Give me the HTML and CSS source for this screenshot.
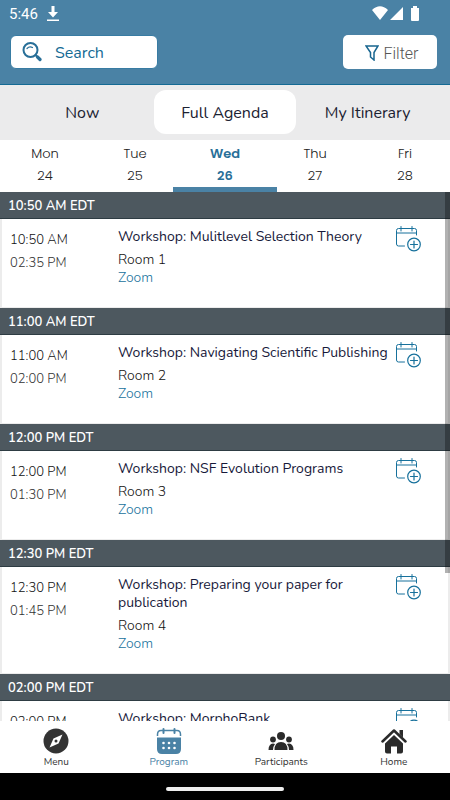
FILE: index.html
```html
<!DOCTYPE html>
<html lang="en">
<head>
<meta charset="utf-8">
<meta name="viewport" content="width=device-width, initial-scale=1">
<title>Program</title>
<link rel="stylesheet" href="styles.css">
</head>
<body>
<svg class="defs" aria-hidden="true">
  <symbol id="add-calendar" viewBox="0 0 26 26">
    <g fill="none" stroke="currentColor" stroke-linecap="round">
      <path d="M9.500 20H3.500Q1.500 20 1.500 18V4.500Q1.500 2.500 3.500 2.500H19.500Q21.500 2.500 21.500 4.500V9M1.500 7H21.500M6 .5V5M17 .5V5"/>
      <circle cx="19" cy="18.500" r="6.300" stroke-width="1.200"/>
      <path d="M15.500 18.500H22.500M19 15V22" stroke-width="1.200"/>
    </g>
  </symbol>
</svg>
<header class="top">
  <div class="status">
    <span>5:46</span>
    <svg class="download" viewBox="0 0 12 16" fill="currentColor"><path d="M4.500 0h3v6H11l-5 5.500L1 6h3.500zM0 13.500h12V15H0z"/></svg>
    <svg class="signals" viewBox="0 0 48 16" fill="currentColor"><path d="M0 4Q8-3.500 16 4L8 14zM18 14 31 1V14zM39 2h2V0h4v2h2v12q0 1-1 1h-6q-1 0-1-1V2z"/></svg>
  </div>
  <div class="tools">
    <label class="search">
      <svg viewBox="0 0 20 20" fill="none" stroke="currentColor" stroke-linecap="round"><circle cx="8.500" cy="8" r="7" stroke-width="2"/><path d="M5 6.500Q7.500 3.800 10.500 5.500" stroke-width="1.200"/><path d="m13.500 13 1.500 1.500" stroke-width="2"/><path d="m15.500 15 2.500 2.500" stroke-width="3.200"/></svg>
      <input type="text" placeholder="Search" aria-label="Search">
    </label>
    <button class="filter" type="button">
      <svg viewBox="0 0 14 16" fill="none" stroke="currentColor" stroke-width="1.500"><path d="M1 1H13L9 7.500V15L5.500 12V7.500Z"/></svg>
      Filter
    </button>
  </div>
</header>
<nav class="tabs">
  <button type="button">Now</button>
  <button type="button" class="on">Full Agenda</button>
  <button type="button">My Itinerary</button>
</nav>
<nav class="days">
  <button type="button">Mon<span>24</span></button>
  <button type="button">Tue<span>25</span></button>
  <button type="button" class="on">Wed<span>26</span></button>
  <button type="button">Thu<span>27</span></button>
  <button type="button">Fri<span>28</span></button>
</nav>
<main class="agenda">
  <div class="list">
    <section>
      <h2>10:50 AM EDT</h2>
      <article>
        <div class="times"><div>10:50 AM</div><div class="end">02:35 PM</div></div>
        <div class="info"><h3>Workshop: Mulitlevel Selection Theory</h3><p>Room 1</p><a href="#">Zoom</a></div>
        <button type="button" class="add" aria-label="Add to itinerary"><svg><use href="#add-calendar"/></svg></button>
      </article>
    </section>
    <section>
      <h2>11:00 AM EDT</h2>
      <article>
        <div class="times"><div>11:00 AM</div><div class="end">02:00 PM</div></div>
        <div class="info"><h3>Workshop: Navigating Scientific Publishing</h3><p>Room 2</p><a href="#">Zoom</a></div>
        <button type="button" class="add" aria-label="Add to itinerary"><svg><use href="#add-calendar"/></svg></button>
      </article>
    </section>
    <section>
      <h2>12:00 PM EDT</h2>
      <article>
        <div class="times"><div>12:00 PM</div><div class="end">01:30 PM</div></div>
        <div class="info"><h3>Workshop: NSF Evolution Programs</h3><p>Room 3</p><a href="#">Zoom</a></div>
        <button type="button" class="add" aria-label="Add to itinerary"><svg><use href="#add-calendar"/></svg></button>
      </article>
    </section>
    <section>
      <h2>12:30 PM EDT</h2>
      <article>
        <div class="times"><div>12:30 PM</div><div class="end">01:45 PM</div></div>
        <div class="info"><h3>Workshop: Preparing your paper for publication</h3><p>Room 4</p><a href="#">Zoom</a></div>
        <button type="button" class="add" aria-label="Add to itinerary"><svg><use href="#add-calendar"/></svg></button>
      </article>
    </section>
    <section>
      <h2>02:00 PM EDT</h2>
      <article>
        <div class="times"><div>02:00 PM</div></div>
        <div class="info"><h3>Workshop: MorphoBank</h3></div>
        <button type="button" class="add" aria-label="Add to itinerary"><svg><use href="#add-calendar"/></svg></button>
      </article>
    </section>
  </div>
  <div class="thumb"></div>
</main>
<nav class="bottom">
  <a href="#"><svg viewBox="0 0 26 26"><circle cx="13" cy="13" r="12.500" fill="#333"/><path d="M19.500 6.500 15.500 15.500 6.500 19.500 10.500 10.500Z" fill="#fff"/><circle cx="13" cy="13" r="1.500" fill="#333"/></svg>Menu</a>
  <a href="#" class="on"><svg viewBox="0 0 26 26" fill="currentColor"><path d="M1 9.500H25V21Q25 26 20 26H6Q1 26 1 21Z"/><path d="M1.500 8V6.500Q1.500 2.500 5 2.500H21Q24.500 2.500 24.500 6.500V8" fill="none" stroke="currentColor" stroke-width="1.500"/><path d="M7.500 1V5M18.500 1V5" stroke="currentColor" stroke-width="2" stroke-linecap="round"/><g fill="#fff"><circle cx="7.500" cy="15" r="1.300"/><circle cx="13" cy="15" r="1.300"/><circle cx="18.500" cy="15" r="1.300"/><circle cx="7.500" cy="20" r="1.300"/><circle cx="13" cy="20" r="1.300"/><circle cx="18.500" cy="20" r="1.300"/></g></svg>Program</a>
  <a href="#"><svg viewBox="0 0 26 26" fill="#2b2b2b"><circle cx="13" cy="8" r="4"/><circle cx="5" cy="11.500" r="2.900"/><circle cx="21" cy="11.500" r="2.900"/><path d="M6.500 22Q6.500 14 13 14T19.500 22ZM.5 22Q.5 16 5 15.500L7 16Q5 18.500 5 22ZM25.500 22Q25.500 16 21 15.500L19 16Q21 18.500 21 22Z"/></svg>Participants</a>
  <a href="#"><svg viewBox="0 0 26 26" fill="#2b2b2b"><path d="M1.500 13.500 13 2.500 24.500 13.500" fill="none" stroke="#2b2b2b" stroke-width="2.500" stroke-linecap="round" stroke-linejoin="round"/><path d="M18.500 2H22V9.500L18.500 6ZM13 7 22 15.500V23.500Q22 25.500 20 25.500H16V18.500H10V25.500H6Q4 25.500 4 23.500V15.500Z"/></svg>Home</a>
</nav>
<footer class="gesture"><span></span></footer>
</body>
</html>
```
FILE: styles.css
```css
* {
  box-sizing: border-box;
}

body {
  display: flex;
  flex-direction: column;
  height: 100vh;
  margin: 0;
  overflow: hidden;
  background: #fff;
  color: #222;
  font-family: Nunito, Lato, "Open Sans", sans-serif;
  font-size: 14px;
}

button,
input {
  padding: 0;
  border: 0;
  background: none;
  color: inherit;
  font: inherit;
}

a {
  color: inherit;
  text-decoration: none;
}

svg {
  display: block;
  flex: none;
}

.defs {
  position: absolute;
  width: 0;
  height: 0;
}

.top {
  flex: none;
  padding-bottom: 15px;
  border-bottom: 1px solid #146a94;
  background: #4a82a5;
}

.status {
  display: flex;
  align-items: center;
  height: 28px;
  margin-bottom: 7px;
  padding: 0 30px 0 9px;
  color: #fff;
  font-family: Roboto, sans-serif;
  font-size: 15px;
}

.download {
  width: 12px;
  height: 16px;
  margin-left: 9px;
}

.signals {
  width: 48px;
  height: 16px;
  margin-left: auto;
}

.tools {
  display: flex;
  justify-content: space-between;
  padding: 0 13px 0 10px;
}

.search {
  display: flex;
  align-items: center;
  gap: 13px;
  width: 148px;
  height: 34px;
  padding: 0 10px 0 11px;
  border: 1px solid #387ca3;
  border-radius: 6px;
  background: #fff;
  color: #286f98;
  font-size: 16px;
}

.search svg {
  width: 20px;
  height: 20px;
}

.search input {
  flex: 1;
  min-width: 0;
  padding-top: 1px;
  outline: 0;
}

.search input::placeholder {
  color: #146a94;
  opacity: 1;
}

.filter {
  display: flex;
  align-items: center;
  justify-content: center;
  gap: 5px;
  width: 94px;
  height: 34px;
  padding: 2px 0 0 3px;
  border-radius: 5px;
  background: #fff;
  color: #555;
  font-family: Roboto, sans-serif;
  font-size: 16px;
  font-weight: 300;
}

.filter svg {
  width: 14px;
  height: 16px;
  color: #17658f;
}

.tabs {
  display: grid;
  flex: none;
  grid-template-columns: repeat(3, 1fr);
  height: 55px;
  padding: 5px 11px 6px;
  background: #ebebec;
  color: #1b2232;
  font-size: 16px;
}

.tabs button {
  padding-top: 2px;
  border-radius: 12px;
}

.tabs .on {
  background: #fff;
}

.days {
  display: grid;
  flex: none;
  grid-template-columns: repeat(5, 1fr);
  height: 52px;
  font-family: Poppins, Nunito, sans-serif;
  font-size: 13px;
  font-weight: 300;
}

.days button {
  display: flex;
  flex-direction: column;
  align-items: center;
  margin: 0 -7px;
  padding-top: 3px;
  border-bottom: 5px solid transparent;
  line-height: 22px;
}

.days .on {
  border-color: #4a82a5;
  color: #286f98;
  font-weight: 600;
}

.agenda {
  position: relative;
  flex: 1;
  min-height: 0;
}

.list {
  height: 100%;
  overflow: hidden;
}

.thumb {
  position: absolute;
  top: 0;
  right: 0;
  width: 5px;
  height: 72%;
  background: rgba(0, 0, 0, 0.3);
}

h2,
h3,
p {
  margin: 0;
  font-size: inherit;
  font-weight: 400;
}

h2 {
  height: 27px;
  padding: 1px 0 0 8px;
  border-bottom: 1px solid #2e3c43;
  background: #4d585f;
  color: #fff;
  font-size: 13px;
  font-weight: 600;
  line-height: 27px;
}

article {
  display: flex;
  align-items: flex-start;
  min-height: 89px;
  padding: 9px 27px 20px 8px;
  border: solid #ececec;
  border-width: 0 2px 1px;
  line-height: 18px;
}

.times {
  flex: none;
  width: 108px;
  padding-top: 1px;
  color: #111;
  font-size: 13px;
  font-weight: 300;
  line-height: 23px;
}

.end {
  color: #333;
}

.info {
  flex: 1;
}

h3 {
  margin-bottom: 5px;
  color: #17193a;
}

.info p {
  font-weight: 300;
  color: #111;
}

.info a {
  display: block;
  color: #17719c;
  font-weight: 300;
}

.add {
  margin-top: -2px;
  color: #17719c;
}

.add svg {
  width: 26px;
  height: 26px;
}

.bottom {
  display: grid;
  flex: none;
  grid-template-columns: repeat(4, 1fr);
  height: 52px;
  padding-top: 7px;
  font-size: 10px;
  line-height: 16px;
}

.bottom a {
  display: flex;
  flex-direction: column;
  align-items: center;
  color: #333;
}

.bottom .on {
  color: #4a82a5;
}

.bottom svg {
  width: 26px;
  height: 26px;
}

.gesture {
  display: flex;
  flex: none;
  align-items: center;
  justify-content: center;
  height: 27px;
  padding-top: 5px;
  background: #000;
}

.gesture span {
  width: 118px;
  height: 4px;
  border-radius: 2px;
  background: #eee;
}
```
